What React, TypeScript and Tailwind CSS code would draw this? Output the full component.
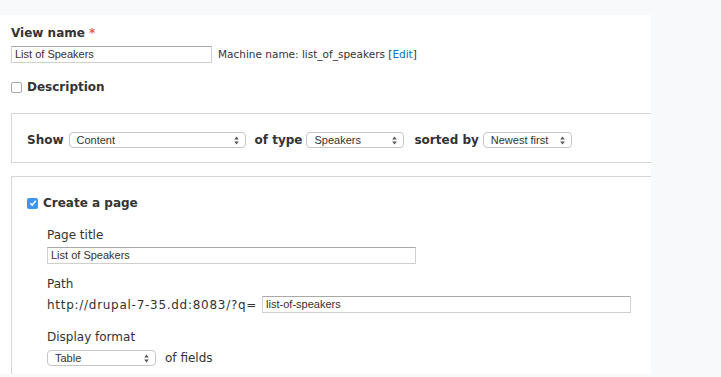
import React from 'react';

const sans = "font-['DejaVu_Sans',sans-serif]";
const arial = "font-['Liberation_Sans',Arial,sans-serif]";

function SelectArrows() {
  return (
    <svg width="5" height="9" viewBox="0 0 5 9" className="shrink-0">
      <path d="M2.5 0.5 L4.8 3.5 L0.2 3.5 Z" fill="#555" />
      <path d="M2.5 8.5 L4.8 5.5 L0.2 5.5 Z" fill="#555" />
    </svg>
  );
}

interface FakeSelectProps {
  readonly value: string;
  readonly className: string;
}

function FakeSelect({ value, className }: FakeSelectProps) {
  return (
    <div
      className={`flex h-[16px] items-center justify-between rounded-[4px] border border-[#c6c6c6] bg-white pl-[7px] pr-[6px] text-[11px] leading-none text-[#333] ${arial} ${className}`}
    >
      <span>{value}</span>
      <SelectArrows />
    </div>
  );
}

interface TextBoxProps {
  readonly value: string;
  readonly className: string;
}

function TextBox({ value, className }: TextBoxProps) {
  return (
    <div
      className={`flex h-[17px] items-center border border-[#cfcfcf] border-t-[#a9a9a9] bg-white pl-[3px] text-[11px] leading-none text-[#3a3027] ${arial} ${className}`}
    >
      {value}
    </div>
  );
}

function Checkbox({ checked }: { checked: boolean }) {
  if (checked) {
    return (
      <div className="flex h-[11px] w-[11px] items-center justify-center rounded-[2px] bg-[#3d97f2]">
        <svg width="8" height="8" viewBox="0 0 8 8">
          <path d="M1.3 4.2 L3.2 6.1 L6.8 1.8" stroke="#fff" strokeWidth="1.5" fill="none" />
        </svg>
      </div>
    );
  }
  return <div className="h-[11px] w-[11px] rounded-[2px] border border-[#a8a8a8] bg-white" />;
}

export default function App() {
  return (
    <div className={`h-[377px] w-[721px] bg-[#f8f9fb] pt-[15px] text-[#333] ${sans}`}>
      <div className="h-[359px] w-[651px] overflow-hidden bg-white pl-[11px]">
        {/* View name */}
        <div className="mt-[10px] h-[16px] text-[12px] font-bold leading-[16px]">
          View name <span className="text-[#e0624a]">*</span>
        </div>
        <div className="mt-[5px] flex items-center">
          <TextBox value="List of Speakers" className="w-[201px]" />
          <span className="ml-[6px] text-[10.5px] text-[#333]">
            Machine name: list_of_speakers [<span className="text-[#0074bd]">Edit</span>]
          </span>
        </div>
        {/* Description */}
        <div className="mt-[16px] flex h-[16px] items-center gap-[5px]">
          <Checkbox checked={false} />
          <span className="text-[12px] font-bold">Description</span>
        </div>

        {/* Show ... */}
        <div className="mt-[18px] flex h-[50px] w-[700px] items-center border border-[#d6d6d6] pl-[15px] pt-[4px] text-[12px]">
          <span className="font-bold">Show</span>
          <FakeSelect value="Content" className="ml-[5px] w-[177px]" />
          <span className="ml-[9px] font-bold">of type</span>
          <FakeSelect value="Speakers" className="ml-[4px] w-[98px]" />
          <span className="ml-[10px] font-bold">sorted by</span>
          <FakeSelect value="Newest first" className="ml-[4px] w-[89px]" />
        </div>

        {/* Create a page */}
        <div className="mt-[13px] h-[300px] w-[700px] border border-[#d6d6d6] pl-[15px] pt-[18px]">
          <div className="flex h-[16px] items-center gap-[5px]">
            <Checkbox checked />
            <span className="text-[12px] font-bold">Create a page</span>
          </div>
          <div className="pl-[20px] text-[12px]">
            <div className="mt-[16px] h-[16px] leading-[16px]">Page title</div>
            <TextBox value="List of Speakers" className="mt-[4px] w-[369px]" />
            <div className="mt-[12px] h-[16px] leading-[16px]">Path</div>
            <div className="mt-[4px] flex h-[17px] items-center">
              <span className="tracking-[0.72px]">http://drupal-7-35.dd:8083/?q=</span>
              <TextBox value="list-of-speakers" className="ml-[5px] w-[369px]" />
            </div>
            <div className="mt-[16px] h-[16px] leading-[16px]">Display format</div>
            <div className="mt-[5px] flex h-[16px] items-center">
              <FakeSelect value="Table" className="w-[109px]" />
              <span className="ml-[9px]">of fields</span>
            </div>
          </div>
        </div>
      </div>
    </div>
  );
}
